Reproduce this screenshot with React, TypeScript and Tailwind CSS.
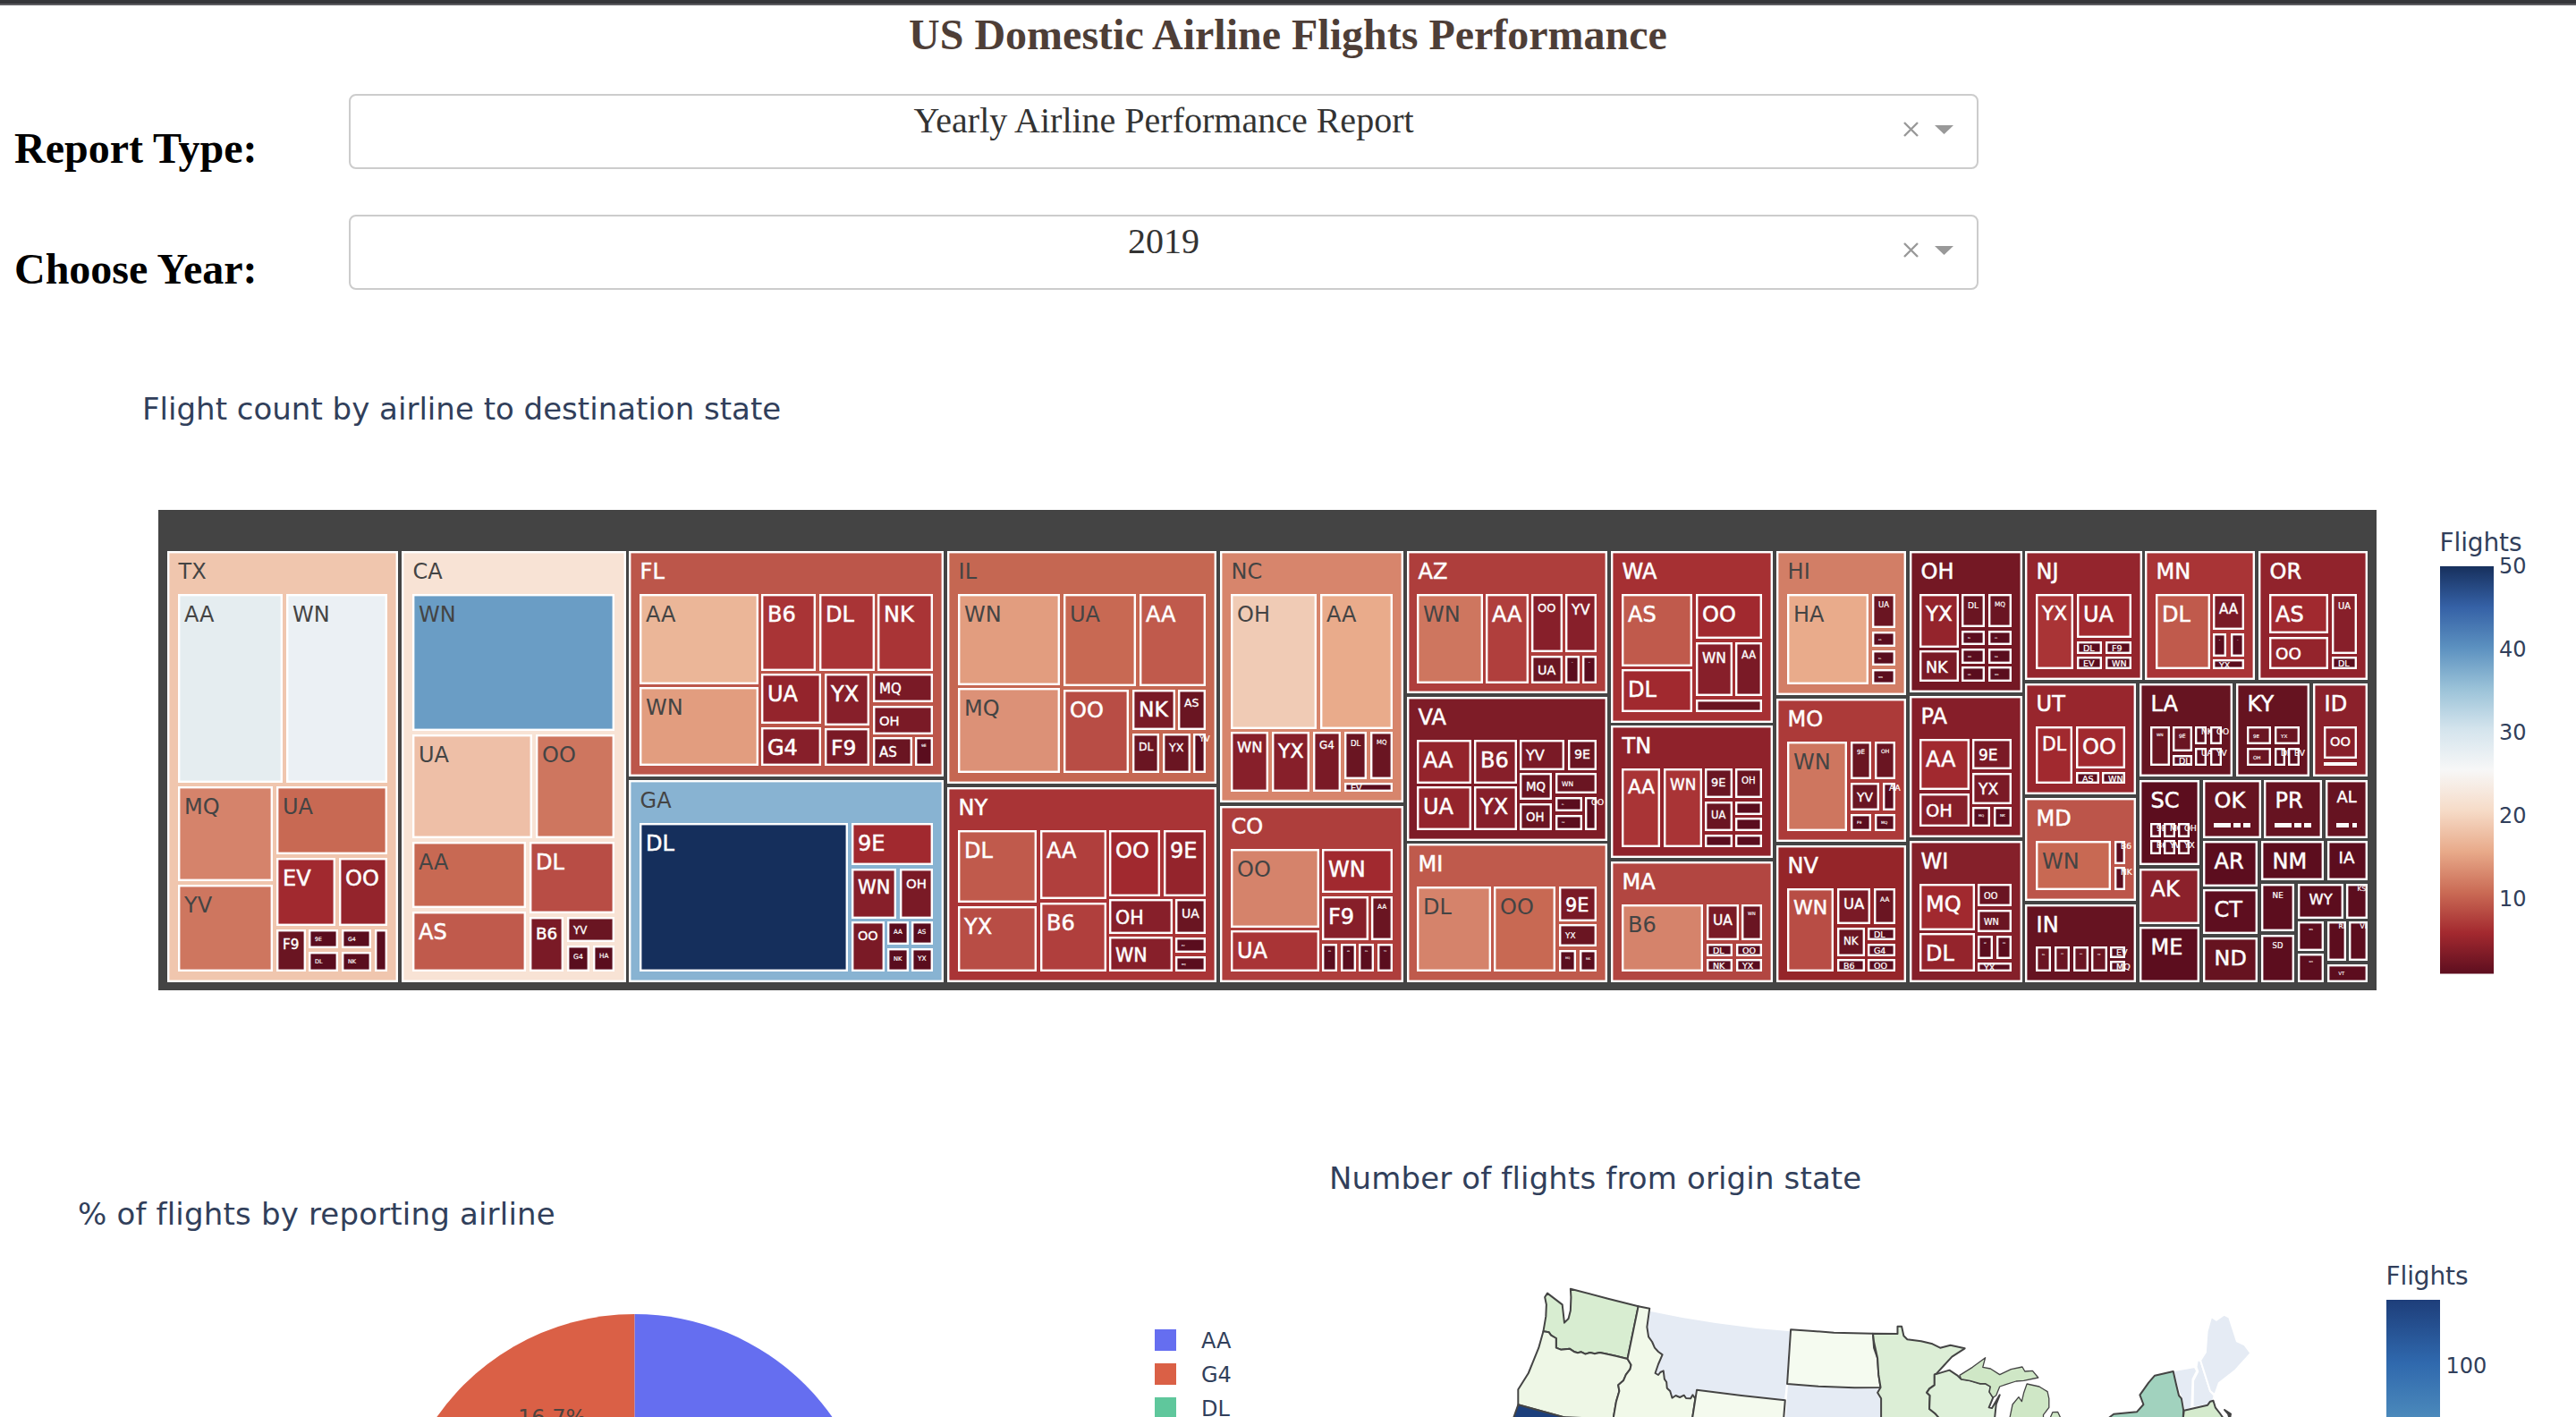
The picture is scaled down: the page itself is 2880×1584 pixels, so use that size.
import React from "react";

type Tile = [number, number, number, number, string, number];
type State = {
  name: string;
  fill: string;
  box: [number, number, number, number];
  tiles: Tile[];
};
type Block = { ox: number; oy: number; sx: number; sy: number; states: State[] };

const SANS = "'DejaVu Sans', Verdana, sans-serif";
const INK = "#313f5b";

// Fill for a tile, keyed by its number of flights.
const SHADE: Record<number, string> = {
  0: "#e3c5ca",
  1: "#5a0d1e",
  2: "#6a1522",
  3: "#7a1a26",
  4: "#871f2a",
  5: "#94242c",
  6: "#a1292f",
  7: "#a93436",
  8: "#b03f3d",
  9: "#b84d45",
  10: "#c05a4c",
  11: "#c86953",
  12: "#ce765f",
  13: "#d5836b",
  14: "#dc9177",
  15: "#e29d7f",
  16: "#e9ab8b",
  17: "#ebb698",
  18: "#eebfa7",
  20: "#f0cbb5",
  27: "#ebf0f4",
  28: "#e5edf0",
  38: "#6a9dc5",
  50: "#152f5c",
};

const ADVANCE: Record<string, number> = {
  A: 0.684, B: 0.686, C: 0.698, D: 0.77, E: 0.632, F: 0.575, G: 0.775, H: 0.752, I: 0.421, J: 0.455,
  K: 0.693, L: 0.557, M: 0.843, N: 0.748, O: 0.787, P: 0.603, Q: 0.787, R: 0.695, S: 0.684, T: 0.616,
  U: 0.732, V: 0.684, W: 0.989, X: 0.685, Y: 0.615, Z: 0.685,
};

const BLOCKS: Block[] = [
  {
    ox: 170, oy: 560, sx: 2.9037, sy: 2.8,
    states: [
      {
        name: "TX", fill: "#f0c6ae", box: [49, 157, 799, 1506],
        tiles: [
          [84, 291, 425, 882, "AA", 28],
          [436, 291, 764, 882, "WN", 27],
          [84, 893, 392, 1190, "MQ", 13],
          [84, 1201, 392, 1473, "YV", 12],
          [404, 893, 764, 1106, "UA", 11],
          [404, 1117, 595, 1330, "EV", 6],
          [607, 1117, 764, 1330, "OO", 5],
          [404, 1341, 498, 1473, "F9", 2],
          [509, 1341, 604, 1401, "9E", 1],
          [509, 1412, 604, 1473, "DL", 1],
          [616, 1341, 711, 1401, "G4", 1],
          [616, 1412, 711, 1473, "NK", 1],
          [722, 1341, 764, 1473, "", 1],
        ],
      },
      {
        name: "CA", fill: "#f8e3d5", box: [810, 157, 1538, 1506],
        tiles: [
          [845, 291, 1502, 719, "WN", 38],
          [845, 731, 1233, 1056, "UA", 18],
          [1245, 731, 1502, 1056, "OO", 12],
          [845, 1067, 1213, 1274, "AA", 11],
          [845, 1285, 1213, 1473, "AS", 10],
          [1225, 1067, 1502, 1291, "DL", 9],
          [1225, 1302, 1336, 1473, "B6", 3],
          [1348, 1302, 1502, 1381, "YV", 2],
          [1348, 1392, 1420, 1473, "G4", 1],
          [1431, 1392, 1502, 1473, "HA", 1],
        ],
      },
    ],
  },
  {
    ox: 690, oy: 600, sx: 3, sy: 3,
    states: [
      {
        name: "FL", fill: "#bc564a", box: [40, 48, 1096, 804],
        tiles: [
          [76, 192, 473, 494, "AA", 17],
          [76, 505, 473, 769, "WN", 15],
          [484, 192, 667, 449, "B6", 7],
          [679, 192, 863, 449, "DL", 7],
          [874, 192, 1059, 449, "NK", 7],
          [484, 460, 684, 627, "UA", 5],
          [484, 638, 684, 769, "G4", 4],
          [696, 460, 847, 632, "YX", 4],
          [696, 643, 847, 769, "F9", 3],
          [858, 460, 1059, 556, "MQ", 3],
          [858, 567, 1059, 662, "OH", 3],
          [858, 673, 989, 769, "AS", 2],
          [1000, 673, 1059, 769, "9E", 1],
        ],
      },
      {
        name: "GA", fill: "#88b3d2", box: [40, 816, 1096, 1494],
        tiles: [
          [76, 960, 774, 1458, "DL", 50],
          [786, 960, 1059, 1101, "9E", 6],
          [786, 1112, 937, 1280, "WN", 4],
          [948, 1112, 1059, 1280, "OH", 3],
          [786, 1291, 896, 1458, "OO", 3],
          [907, 1291, 978, 1368, "AA", 1],
          [988, 1291, 1059, 1368, "AS", 1],
          [907, 1380, 978, 1458, "NK", 1],
          [988, 1380, 1059, 1458, "YX", 1],
        ],
      },
    ],
  },
  {
    ox: 1050, oy: 600, sx: 2.9585, sy: 3,
    states: [
      {
        name: "IL", fill: "#c56752", box: [27, 48, 917, 828],
        tiles: [
          [62, 192, 399, 497, "WN", 15],
          [62, 508, 399, 792, "MQ", 14],
          [411, 192, 651, 501, "UA", 11],
          [663, 192, 882, 501, "AA", 10],
          [411, 513, 628, 792, "OO", 9],
          [639, 513, 780, 648, "NK", 3],
          [790, 513, 882, 648, "AS", 2],
          [639, 659, 729, 792, "DL", 2],
          [740, 659, 830, 792, "YX", 2],
          [841, 659, 882, 792, "YV", 1],
        ],
      },
      {
        name: "NY", fill: "#a93436", box: [27, 840, 917, 1494],
        tiles: [
          [62, 984, 322, 1227, "DL", 10],
          [62, 1239, 322, 1458, "YX", 9],
          [333, 984, 552, 1215, "AA", 8],
          [333, 1226, 552, 1458, "B6", 8],
          [562, 984, 731, 1205, "OO", 6],
          [742, 984, 882, 1205, "9E", 5],
          [562, 1216, 772, 1332, "OH", 4],
          [562, 1342, 772, 1458, "WN", 4],
          [782, 1216, 882, 1332, "UA", 2],
          [782, 1343, 882, 1395, "EV", 1],
          [782, 1406, 882, 1458, "MQ", 1],
        ],
      },
      {
        name: "NC", fill: "#d7856c", box: [928, 48, 1535, 890],
        tiles: [
          [963, 192, 1249, 644, "OH", 20],
          [1260, 192, 1500, 644, "AA", 16],
          [963, 655, 1089, 855, "WN", 4],
          [1100, 655, 1226, 855, "YX", 4],
          [1237, 655, 1328, 855, "G4", 3],
          [1339, 655, 1414, 812, "DL", 2],
          [1425, 655, 1500, 812, "MQ", 2],
          [1339, 824, 1500, 855, "EV", 1],
        ],
      },
      {
        name: "CO", fill: "#ae3e3c", box: [928, 903, 1535, 1494],
        tiles: [
          [963, 1047, 1256, 1310, "OO", 13],
          [963, 1321, 1256, 1458, "UA", 7],
          [1266, 1047, 1500, 1194, "WN", 6],
          [1266, 1205, 1419, 1353, "F9", 4],
          [1429, 1205, 1500, 1353, "AA", 2],
          [1266, 1364, 1317, 1458, "AS", 1],
          [1328, 1364, 1378, 1458, "B6", 1],
          [1388, 1364, 1439, 1458, "DL", 1],
          [1449, 1364, 1500, 1458, "YV", 1],
        ],
      },
    ],
  },
  {
    ox: 1560, oy: 600, sx: 3, sy: 3,
    states: [
      {
        name: "AZ", fill: "#ae3e3c", box: [38, 48, 712, 526],
        tiles: [
          [73, 192, 293, 492, "WN", 12],
          [303, 192, 446, 492, "AA", 8],
          [457, 192, 560, 387, "OO", 4],
          [571, 192, 675, 387, "YV", 4],
          [457, 398, 560, 492, "UA", 2],
          [571, 398, 617, 492, "AS", 1],
          [628, 398, 675, 492, "DL", 1],
        ],
      },
      {
        name: "VA", fill: "#7e1c27", box: [38, 538, 712, 1019],
        tiles: [
          [73, 682, 254, 828, "AA", 5],
          [73, 838, 254, 983, "UA", 5],
          [264, 682, 407, 828, "B6", 4],
          [264, 838, 407, 983, "YX", 4],
          [418, 682, 568, 782, "YV", 3],
          [579, 682, 675, 782, "9E", 2],
          [418, 793, 526, 883, "MQ", 2],
          [418, 893, 526, 983, "OH", 2],
          [537, 793, 675, 862, "WN", 2],
          [537, 873, 626, 922, "DL", 1],
          [537, 933, 626, 983, "G4", 1],
          [636, 873, 675, 983, "OO", 1],
        ],
      },
      {
        name: "MI", fill: "#bf5a4c", box: [38, 1030, 712, 1494],
        tiles: [
          [73, 1173, 320, 1458, "DL", 13],
          [330, 1173, 537, 1458, "OO", 11],
          [548, 1173, 675, 1290, "9E", 3],
          [548, 1300, 675, 1374, "YX", 2],
          [548, 1385, 606, 1458, "MQ", 1],
          [617, 1385, 675, 1458, "NK", 1],
        ],
      },
      {
        name: "WA", fill: "#a63033", box: [723, 48, 1266, 624],
        tiles: [
          [758, 192, 996, 434, "AS", 10],
          [758, 445, 996, 588, "DL", 6],
          [1007, 192, 1230, 343, "OO", 6],
          [1007, 354, 1130, 534, "WN", 4],
          [1141, 354, 1230, 534, "AA", 3],
          [1007, 545, 1230, 588, "", 2],
        ],
      },
      {
        name: "TN", fill: "#8f222b", box: [723, 634, 1266, 1077],
        tiles: [
          [758, 778, 888, 1042, "AA", 7],
          [899, 778, 1029, 1042, "WN", 7],
          [1039, 778, 1130, 877, "9E", 2],
          [1039, 888, 1130, 987, "UA", 2],
          [1141, 778, 1230, 877, "OH", 2],
          [1141, 888, 1230, 932, "", 1],
          [1141, 942, 1230, 987, "", 1],
          [1039, 998, 1130, 1042, "", 1],
          [1141, 998, 1230, 1042, "", 1],
        ],
      },
      {
        name: "MA", fill: "#b24641", box: [723, 1089, 1266, 1494],
        tiles: [
          [758, 1233, 1032, 1458, "B6", 13],
          [1043, 1233, 1151, 1353, "UA", 3],
          [1162, 1233, 1230, 1353, "WN", 2],
          [1043, 1364, 1131, 1406, "DL", 1],
          [1142, 1364, 1230, 1406, "OO", 1],
          [1043, 1416, 1131, 1458, "NK", 1],
          [1142, 1416, 1230, 1458, "YX", 1],
        ],
      },
    ],
  },
  {
    ox: 1970, oy: 600, sx: 3, sy: 3,
    states: [
      {
        name: "HI", fill: "#d27e66", box: [47, 48, 483, 530],
        tiles: [
          [83, 192, 357, 495, "HA", 16],
          [369, 192, 447, 305, "UA", 2],
          [369, 318, 447, 369, "AA", 1],
          [369, 381, 447, 432, "DL", 1],
          [369, 443, 447, 495, "WN", 1],
        ],
      },
      {
        name: "MO", fill: "#ac3a39", box: [47, 542, 483, 1024],
        tiles: [
          [83, 686, 286, 988, "WN", 12],
          [297, 686, 366, 814, "9E", 2],
          [377, 686, 447, 814, "OH", 2],
          [297, 825, 393, 918, "YV", 2],
          [404, 825, 447, 918, "AA", 1],
          [297, 930, 366, 988, "F9", 1],
          [377, 930, 447, 988, "MQ", 1],
        ],
      },
      {
        name: "NV", fill: "#952529", box: [47, 1035, 483, 1494],
        tiles: [
          [83, 1179, 240, 1458, "WN", 9],
          [251, 1179, 363, 1300, "UA", 3],
          [374, 1179, 447, 1300, "AA", 2],
          [251, 1311, 344, 1406, "NK", 2],
          [354, 1311, 447, 1353, "DL", 1],
          [354, 1364, 447, 1406, "G4", 1],
          [251, 1416, 344, 1458, "B6", 1],
          [354, 1416, 447, 1458, "OO", 1],
        ],
      },
      {
        name: "OH", fill: "#741824", box: [494, 48, 872, 523],
        tiles: [
          [528, 192, 660, 372, "YX", 5],
          [528, 382, 660, 487, "NK", 3],
          [669, 192, 747, 303, "DL", 2],
          [758, 192, 836, 303, "MQ", 2],
          [669, 314, 747, 364, "9E", 1],
          [758, 314, 836, 364, "AA", 1],
          [669, 375, 747, 426, "OO", 1],
          [758, 375, 836, 426, "G4", 1],
          [669, 436, 747, 487, "UA", 1],
          [758, 436, 836, 487, "WN", 1],
        ],
      },
      {
        name: "PA", fill: "#861e29", box: [494, 534, 872, 1008],
        tiles: [
          [528, 678, 695, 850, "AA", 6],
          [528, 860, 695, 972, "OH", 4],
          [705, 678, 836, 781, "9E", 3],
          [705, 792, 836, 896, "YX", 3],
          [705, 907, 765, 972, "MQ", 1],
          [776, 907, 836, 972, "NK", 1],
        ],
      },
      {
        name: "WI", fill: "#85202a", box: [494, 1020, 872, 1494],
        tiles: [
          [528, 1163, 713, 1320, "MQ", 6],
          [528, 1330, 713, 1458, "DL", 5],
          [723, 1163, 836, 1240, "OO", 2],
          [723, 1250, 836, 1327, "WN", 2],
          [723, 1338, 773, 1416, "9E", 1],
          [785, 1338, 836, 1416, "F9", 1],
          [723, 1427, 836, 1458, "YX", 1],
        ],
      },
    ],
  },
  {
    ox: 2250, oy: 600, sx: 3, sy: 3,
    states: [
      {
        name: "NJ", fill: "#94252d", box: [42, 48, 434, 480],
        tiles: [
          [78, 192, 204, 444, "YX", 7],
          [215, 192, 399, 339, "UA", 6],
          [215, 350, 301, 392, "DL", 1],
          [312, 350, 399, 392, "F9", 1],
          [215, 402, 301, 444, "EV", 1],
          [312, 402, 399, 444, "WN", 1],
        ],
      },
      {
        name: "MN", fill: "#a93436", box: [445, 48, 813, 480],
        tiles: [
          [480, 192, 662, 444, "DL", 10],
          [673, 192, 777, 312, "AA", 3],
          [673, 323, 718, 401, "9E", 1],
          [731, 323, 777, 401, "OO", 1],
          [673, 411, 777, 444, "YX", 1],
        ],
      },
      {
        name: "OR", fill: "#91232c", box: [824, 48, 1191, 480],
        tiles: [
          [860, 192, 1060, 325, "AS", 6],
          [860, 336, 1060, 444, "OO", 5],
          [1071, 192, 1155, 392, "UA", 4],
          [1071, 402, 1155, 444, "DL", 1],
        ],
      },
      {
        name: "UT", fill: "#98262d", box: [42, 492, 415, 864],
        tiles: [
          [78, 636, 201, 829, "DL", 6],
          [212, 636, 379, 777, "OO", 6],
          [212, 788, 290, 829, "AS", 1],
          [301, 788, 379, 829, "WN", 1],
        ],
      },
      {
        name: "LA", fill: "#661421", box: [426, 492, 738, 805],
        tiles: [
          [462, 635, 527, 769, "WN", 2],
          [537, 635, 602, 721, "9E", 2],
          [537, 731, 602, 769, "DL", 1],
          [612, 635, 652, 697, "NK", 1],
          [662, 635, 702, 697, "OO", 1],
          [612, 707, 652, 769, "UA", 1],
          [662, 707, 702, 769, "YV", 1],
        ],
      },
      {
        name: "KY", fill: "#661320", box: [749, 492, 997, 805],
        tiles: [
          [785, 635, 868, 697, "9E", 2],
          [785, 707, 868, 769, "OH", 2],
          [878, 635, 962, 697, "YX", 2],
          [878, 707, 915, 769, "DL", 1],
          [925, 707, 962, 769, "EV", 1],
        ],
      },
      {
        name: "ID", fill: "#8b212b", box: [1008, 492, 1191, 805],
        tiles: [
          [1044, 635, 1155, 745, "OO", 4],
          [1044, 756, 1155, 769, "", 0],
        ],
      },
    ],
  },
  {
    ox: 2250, oy: 860, sx: 3, sy: 3,
    states: [
      {
        name: "MD", fill: "#bc554a", box: [42, 95, 415, 441],
        tiles: [
          [78, 239, 331, 405, "WN", 11],
          [342, 239, 379, 317, "B6", 1],
          [342, 327, 379, 405, "NK", 1],
        ],
      },
      {
        name: "IN", fill: "#661321", box: [42, 452, 415, 714],
        tiles: [
          [78, 595, 130, 679, "DL", 2],
          [141, 595, 192, 679, "OO", 2],
          [203, 595, 254, 679, "WN", 2],
          [265, 595, 317, 679, "YX", 2],
          [327, 595, 379, 632, "EV", 1],
          [327, 643, 379, 679, "MQ", 1],
        ],
      },
      {
        name: "SC", fill: "#5c0d1e", box: [426, 36, 628, 321],
        tiles: [
          [462, 180, 499, 227, "9E", 1],
          [508, 180, 546, 227, "MQ", 1],
          [555, 180, 593, 227, "OH", 1],
          [462, 237, 499, 285, "B6", 1],
          [508, 237, 546, 285, "YV", 1],
          [555, 237, 593, 285, "YX", 1],
        ],
      },
      { name: "AK", fill: "#8b212b", box: [426, 332, 628, 518], tiles: [] },
      { name: "ME", fill: "#5c0d1e", box: [426, 528, 628, 714], tiles: [] },
      {
        name: "OK", fill: "#661321", box: [639, 36, 833, 230],
        tiles: [
          [675, 179, 732, 195, "", 0],
          [741, 179, 766, 195, "", 0],
          [774, 179, 799, 195, "", 0],
        ],
      },
      {
        name: "PR", fill: "#661321", box: [844, 36, 1038, 230],
        tiles: [
          [879, 179, 937, 195, "", 0],
          [946, 179, 970, 195, "", 0],
          [979, 179, 1003, 195, "", 0],
        ],
      },
      {
        name: "AL", fill: "#661321", box: [1049, 36, 1191, 230],
        tiles: [
          [1085, 179, 1129, 195, "", 0],
          [1139, 179, 1155, 195, "", 0],
        ],
      },
      { name: "AR", fill: "#5c0d1e", box: [639, 240, 823, 392], tiles: [] },
      { name: "CT", fill: "#5e0e1f", box: [639, 402, 823, 553], tiles: [] },
      { name: "ND", fill: "#661320", box: [639, 563, 823, 714], tiles: [] },
      { name: "NM", fill: "#5c0d1e", box: [834, 240, 1044, 372], tiles: [] },
      { name: "IA", fill: "#5c0d1e", box: [1055, 240, 1191, 372], tiles: [] },
      { name: "NE", fill: "#5c0d1e", box: [834, 383, 946, 544], tiles: [] },
      { name: "SD", fill: "#5c0d1e", box: [834, 554, 946, 714], tiles: [] },
      { name: "WY", fill: "#5c0d1e", box: [956, 383, 1110, 501], tiles: [] },
      { name: "KS", fill: "#5c0d1e", box: [1120, 383, 1191, 501], tiles: [] },
      { name: "MS", fill: "#5c0d1e", box: [956, 511, 1044, 608], tiles: [] },
      { name: "NH", fill: "#5c0d1e", box: [956, 618, 1044, 714], tiles: [] },
      { name: "RI", fill: "#5c0d1e", box: [1055, 511, 1118, 643], tiles: [] },
      { name: "VI", fill: "#5c0d1e", box: [1128, 511, 1191, 643], tiles: [] },
      { name: "VT", fill: "#5c0d1e", box: [1055, 654, 1191, 714], tiles: [] },
    ],
  },
];

// Light fills carry dark labels, dark fills carry white ones.
function labelInk(fill: string) {
  const [r, g, b] = [1, 3, 5].map((i) => parseInt(fill.slice(i, i + 2), 16));
  return (r * 299 + g * 587 + b * 114) / 1000 > 125 ? "#444444" : "#ffffff";
}

function Label({ text, w, h, fill, pad }: { text: string; w: number; h: number; fill: string; pad: number }) {
  if (!text) return null;
  const em = [...text].reduce((sum, c) => sum + (ADVANCE[c] ?? 0.636), 0);
  const byWidth = (w - 2 * pad) / em;
  const byHeight = (h - 14) / 1.2;
  let size = Math.min(24, byWidth, byHeight);
  let base = 7 + size;
  if (byWidth < 0.4) {
    size = pad > 10 ? 7.5 : 9;
    base = pad > 10 ? 8 : 9;
  } else if (byHeight < 0.4) {
    size = 9.5;
    base = h / 2 + 4;
  }
  const ink = labelInk(fill);
  return (
    <text
      x={pad}
      y={base}
      fontSize={size}
      fill={ink}
      stroke={ink}
      strokeWidth={ink === "#ffffff" ? Math.min(0.5, size / 40) : 0}
    >
      {text}
    </text>
  );
}

function Cell({ x, y, w, h, fill, text, pad }: {
  x: number; y: number; w: number; h: number; fill: string; text: string; pad: number;
}) {
  const left = Math.round(x);
  const top = Math.round(y);
  const width = Math.round(x + w) - left;
  const height = Math.round(y + h) - top;
  return (
    <svg x={left} y={top} width={width} height={height} overflow={pad > 10 ? "hidden" : "visible"}>
      <rect
        x={1.2}
        y={1.2}
        width={Math.max(1, width - 2.4)}
        height={Math.max(1, height - 2.4)}
        fill={fill}
        stroke="#ffffff"
        strokeWidth={2.4}
      />
      <Label text={text} w={w} h={h} fill={fill} pad={pad} />
    </svg>
  );
}

function Treemap() {
  return (
    <svg className="shrink-0" width={2480} height={537} viewBox="177 570 2480 537" fontFamily={SANS}>
      <rect x={177} y={570} width={2480} height={537} fill="#444444" />
      {BLOCKS.map(({ ox, oy, sx, sy, states }) =>
        states.map((s) => {
          const place = (b: number[]) => ({
            x: ox + b[0] / sx,
            y: oy + b[1] / sy,
            w: (b[2] - b[0]) / sx,
            h: (b[3] - b[1]) / sy,
          });
          return (
            <g key={s.name}>
              <Cell {...place(s.box)} fill={s.fill} text={s.name} pad={12.6} />
              {s.tiles.map((t, i) => (
                <Cell key={i} {...place(t.slice(0, 4) as number[])} fill={SHADE[t[5]]} text={t[4]} pad={7} />
              ))}
            </g>
          );
        }),
      )}
    </svg>
  );
}

const RD_BU = [
  "#17305d", "#3561a6", "#5c91c0", "#9ac2d8", "#d4e4ed", "#f7f7f7",
  "#f6dbc7", "#e8aa8a", "#ca6b55", "#a3292f", "#5d0e1f",
];

function CountScale() {
  return (
    <svg className="ml-[71px] shrink-0" width={152} height={537} viewBox="2728 570 152 537" fontFamily={SANS} fill={INK}>
      <defs>
        <linearGradient id="count" x1="0" x2="0" y1="0" y2="1">
          {RD_BU.map((c, i) => (
            <stop key={c} offset={i / 10} stopColor={c} />
          ))}
        </linearGradient>
      </defs>
      <text x={2727.5} y={616} fontSize={28} textLength={92}>Flights</text>
      <rect x={2728} y={633} width={60} height={455.5} fill="url(#count)" />
      {[50, 40, 30, 20, 10].map((v, i) => (
        <text key={v} x={2794} y={641 + i * 93.1} fontSize={24}>{v}</text>
      ))}
    </svg>
  );
}

function Dropdown({ value }: { value: string }) {
  return (
    <div className="relative h-[84px] w-[1822px] rounded-lg border-2 border-[#cccccc] bg-white">
      <div className="pt-[8px] text-center text-[40px] leading-none text-[#333333]">{value}</div>
      <div className="absolute top-[29px] right-[26px] flex items-center gap-[18px]">
        <svg width={17} height={17} viewBox="0 0 17 17" stroke="#999999" strokeWidth={2.4}>
          <path d="M1 1 16 16M16 1 1 16" />
        </svg>
        <svg width={21} height={10} viewBox="0 0 21 10" fill="#999999">
          <path d="M0 0H21L10.500 10Z" />
        </svg>
      </div>
    </div>
  );
}

function Field({ label, value }: { label: string; value: string }) {
  return (
    <div className="flex h-[84px]">
      <div className="w-[390px] shrink-0 pt-[37px] pl-4 text-[48px] leading-none font-bold whitespace-nowrap text-black">
        {label}
      </div>
      <Dropdown value={value} />
    </div>
  );
}

const LEGEND = [
  { name: "AA", fill: "#656ef0", y: 86 },
  { name: "G4", fill: "#da6046", y: 124 },
  { name: "DL", fill: "#5fc79c", y: 162 },
];

function AirlineShare() {
  return (
    <svg className="block" width={1440} height={184} fontFamily={SANS} fontSize={24}>
      <path d="M709.4 339V69A270 270 0 0 1 979.400 339Z" fill="#656ef0" />
      <path d="M709.4 339V69A270 270 0 0 0 475.600 204Z" fill="#da6046" />
      <text x={579} y={192.500} fill="#4c433f">16.7%</text>
      {LEGEND.map((l) => (
        <g key={l.name}>
          <rect x={1291} y={l.y} width={24} height={24} fill={l.fill} />
          <text x={1343} y={l.y + 21} fill={INK}>{l.name}</text>
        </g>
      ))}
    </svg>
  );
}

const STATES_WITH_DATA: { d: string; fill: string; thin?: boolean }[] = [
  // Washington
  { fill: "#d8edd1", d: "M122 137 117 150 120 175 119 215 114 265 125 268 129 278 139 288 139 320 148 326 165 323 175 334 181 337 188 334 196 341 205 336 214 340 224 336 235 340 255 347 278 357 299 181 240 155 167 122 168 150 167 195 163 222 155 236 151 175Z" },
  // Oregon
  { fill: "#eef7e6", d: "M114 265 125 268 129 278 139 288 139 320 148 326 165 323 175 334 181 337 188 334 196 341 205 336 214 340 224 336 235 340 255 347 278 357 285 377 283 392 275 410 270 430 260 445 262 465 256 500 250 560 152 552 65 511 65 460 85 405 105 320Z" },
  // California
  { fill: "#1c3f7c", d: "M65 511 170 560 55 560Z" },
  // Idaho
  { fill: "#f1f9e9", d: "M299 181 321 188 316 250 319 283 326 300 331 320 338 333 346 343 338 375 332 405 338 411 342 402 348 397 350 425 354 435 355 455 361 465 365 488 372 480 380 486 388 479 392 489 401 490 405 478 410 490 404 560 250 560 256 500 262 465 260 445 270 430 275 410 283 392 285 377 278 357Z" },
  // Wyoming
  { fill: "#f4faee", d: "M413 461 500 480 585 496 582 560 404 560Z" },
  // North Dakota
  { fill: "#f5fbf0", d: "M596 259 640 264 680 269 756 272 758 320 765 355 767 410 771 453 720 454 650 449 589 441Z" },
  // Minnesota
  { fill: "#dceed6", d: "M756 272 804 273 804 248 812 248 816 280 823 292 850 298 872 307 887 320 907 311 935 322 910 350 895 378 880 406 876 410 876 445 866 457 861 470 867 480 866 525 877 540 887 552 887 560 772 560 772 490 765 470 771 453 767 410 765 355 758 300Z" },
  // Wisconsin
  { fill: "#def0d9", d: "M876 410 905 395 920 412 928 425 945 430 965 440 975 440 985 450 983 468 990 487 982 520 988 522 1003 478 996 510 993 560 887 560 877 540 866 525 867 480 861 470 866 457 876 445Z" },
  // Michigan
  { fill: "#cfe7c6", thin: true, d: "M925 412 950 385 975 353 970 385 985 390 1003 410 1025 392 1047 384 1052 399 1067 397 1078 420 1050 430 1035 432 1015 443 1003 450 996 480 990 487 983 468 985 450 975 440 965 440 945 430 928 425Z" },
  { fill: "#cfe7c6", thin: true, d: "M1056 441 1080 450 1096 467 1099 490 1099 520 1088 545 1088 560 1022 560 1028 510 1040 485 1046 500 1050 470Z" },
  { fill: "#cfe7c6", thin: true, d: "M1100 560 1106 536 1116 535 1123 560Z" },
  // New York
  { fill: "#a1d2be", d: "M1341 399 1305 413 1293 437 1276 478 1283 510 1270 535 1225 542 1212 560 1360 560 1361 530 1357 490 1352 480 1347 445Z" },
  // Massachusetts
  { fill: "#d4eacd", d: "M1362 530 1385 521 1408 512 1413 500 1419 497 1423 520 1432 540 1440 560 1360 560Z" },
  { fill: "#3f4442", d: "M1441 528 1453 542 1451 560 1448 542Z" },
];

const STATES_WITHOUT_DATA = [
  "M321 194Q450 242 596 262L589 441 585 496 500 480 413 461 410 490 405 478 401 490 392 489 388 479 380 486 372 480 365 488 361 465 355 455 354 435 350 425 348 397 342 402 338 411 332 405 338 375 346 343 338 333 331 320 326 300 319 283 316 250Z",
  "M589 441 650 449 720 454 771 453 765 470 772 490 772 560 584 560Z",
  "M1341 397 1383 384 1387 398 1379 425 1377 515 1378 522 1362 530 1357 490 1347 445Z",
  "M1388 362 1394 362 1413 465 1421 480 1418 500 1408 512 1379 521 1380 430 1389 400 1386 384Z",
  "M1415 216 1425 227 1440 209 1450 218 1465 298 1480 310 1492 338 1462 395 1430 438 1422 478 1413 465 1394 362 1404 335 1407 265Z",
];

function OriginMap() {
  return (
    <svg className="ml-[220px] shrink-0" width={900} height={184} viewBox="0 0 1568 552" preserveAspectRatio="none" strokeLinejoin="round">
      {STATES_WITHOUT_DATA.map((d) => (
        <path key={d} d={d} fill="#e5ebf4" stroke="#ffffff" strokeWidth={2} vectorEffect="non-scaling-stroke" />
      ))}
      {STATES_WITH_DATA.map((s) => (
        <path
          key={s.d}
          d={s.d}
          fill={s.fill}
          stroke="#444444"
          strokeWidth={s.thin ? 1.3 : 2}
          vectorEffect="non-scaling-stroke"
        />
      ))}
    </svg>
  );
}

function OriginScale() {
  return (
    <svg className="ml-[108px] shrink-0" width={212} height={184} viewBox="2668 1400 212 184" fontFamily={SANS} fill={INK}>
      <defs>
        <linearGradient id="origin" x1="0" x2="0" y1="0" y2="1">
          <stop offset="0" stopColor="#1e3e7a" />
          <stop offset="0.53" stopColor="#2f68ad" />
          <stop offset="1" stopColor="#4b89bb" />
        </linearGradient>
      </defs>
      <text x={2667.5} y={1436} fontSize={28} textLength={92}>Flights</text>
      <rect x={2668} y={1453} width={60} height={131} fill="url(#origin)" />
      <text x={2734.5} y={1535} fontSize={24}>100</text>
    </svg>
  );
}

export default function App() {
  return (
    <div className="h-[1584px] w-[2880px] overflow-hidden bg-white font-['Liberation_Serif','Times_New_Roman',serif]">
      <div className="h-[6px] border-b-2 border-[#5d5c61] bg-[#35363a]" />
      <h1 className="h-[99px] pt-[9px] text-center text-[48px] leading-none font-bold text-[#4e3e37]">
        US Domestic Airline Flights Performance
      </h1>
      <div className="flex flex-col gap-[51px]">
        <Field label="Report Type:" value="Yearly Airline Performance Report" />
        <Field label="Choose Year:" value="2019" />
      </div>
      <div className="font-['DejaVu_Sans',Verdana,sans-serif] text-[34px] leading-none whitespace-nowrap text-[#313f5b]">
        <h2 className="h-[246px] pt-[116px] pl-[159px] tracking-[0.01px]">Flight count by airline to destination state</h2>
        <div className="flex pl-[177px]">
          <Treemap />
          <CountScale />
        </div>
        <div className="flex">
          <section className="w-[1440px]">
            <h2 className="h-[293px] pt-[233px] pl-[87px] tracking-[0.18px]">% of flights by reporting airline</h2>
            <AirlineShare />
          </section>
          <section className="w-[1440px]">
            <h2 className="h-[293px] pt-[193px] pl-[46px] tracking-[0.14px]">Number of flights from origin state</h2>
            <div className="flex">
              <OriginMap />
              <OriginScale />
            </div>
          </section>
        </div>
      </div>
    </div>
  );
}
